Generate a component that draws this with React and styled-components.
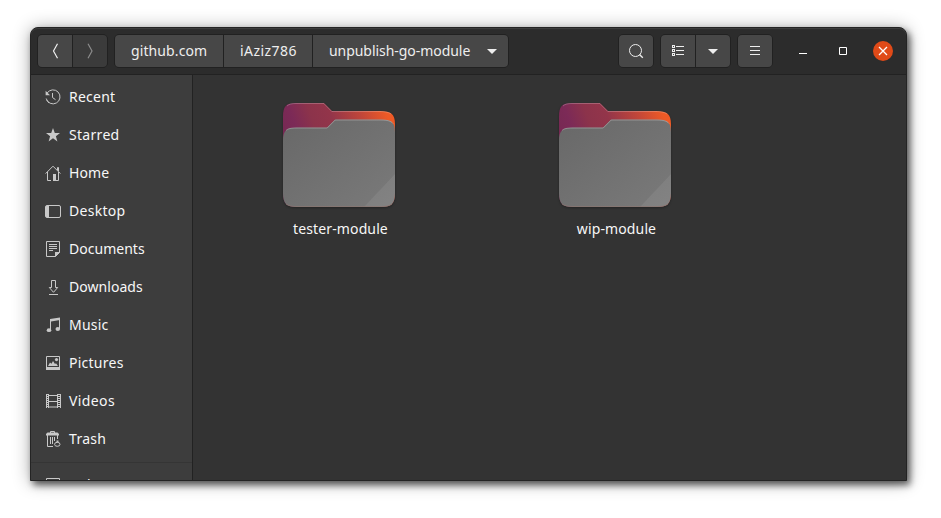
import React from 'react';
import styled, { createGlobalStyle } from 'styled-components';

const GlobalStyle = createGlobalStyle`
  *, *::before, *::after { box-sizing: border-box; }
  body {
    margin: 0;
    background: #fff;
    color: #f7f7f7;
    font: 14px/20px "Noto Sans", "Open Sans", sans-serif;
    overflow: hidden;
  }
`;

const Stage = styled.div`
  height: 518px;
  padding: 27px 34px 37px 30px;
`;

const Window = styled.main`
  display: flex;
  flex-direction: column;
  height: 454px;
  border: 1px solid #242424;
  border-radius: 8px 8px 0 0;
  background: #2c2c2c;
  box-shadow: 0 1px 18px rgba(0, 0, 0, 0.32), 3px 4px 7px rgba(0, 0, 0, 0.6);
`;

const HeaderBar = styled.header`
  display: flex;
  align-items: center;
  height: 47px;
  padding: 0 13px 0 6px;
  border-bottom: 1px solid #222;
  border-radius: 7px 7px 0 0;
  box-shadow: inset 0 1px #3c3c3c;
`;

const ButtonGroup = styled.div`
  display: flex;
  flex: none;
  gap: 1px;
  height: 34px;
  margin-right: ${(p) => p.$gap ?? 6}px;
  border: 1px solid #212121;
  border-radius: 5px;
  overflow: hidden;
  background: #212121;
`;

const Button = styled.button`
  display: flex;
  align-items: center;
  justify-content: center;
  width: ${(p) => p.$width ?? 34}px;
  padding: 0;
  border: 0;
  background: ${(p) => (p.disabled ? '#3b3b3b' : '#474747')};
  color: ${(p) => (p.disabled ? '#8c8c8c' : '#eee')};
  font: inherit;
`;

const Crumb = styled(Button)`
  justify-content: flex-start;
  padding-left: 16px;
  gap: 17px;
`;

const Label = styled.span`
  white-space: nowrap;
  letter-spacing: ${(p) => p.$tracking ?? 0}px;
`;

const Spacer = styled.div`
  flex: 1;
`;

const WindowControls = styled.div`
  display: flex;
  gap: 20px;
`;

const Control = styled.button`
  display: flex;
  width: 20px;
  height: 20px;
  padding: 0;
  border: 0;
  border-radius: 50%;
  background: ${(p) => (p.$close ? '#e04a18' : 'transparent')};
  color: #fff;
`;

const Body = styled.div`
  display: flex;
  flex: 1;
  min-height: 0;
`;

const Sidebar = styled.nav`
  width: 162px;
  padding-top: 3px;
  border-right: 1px solid #222;
  background: #3d3d3d;
  overflow: hidden;
`;

const Place = styled.a`
  display: flex;
  align-items: center;
  gap: 8px;
  height: ${(p) => p.$height ?? 38}px;
  padding-left: 14px;
`;

const Separator = styled.hr`
  height: 1px;
  margin: 4px 0;
  border: 0;
  background: #353535;
`;

const PlaceIcon = styled.svg`
  width: 16px;
  height: 16px;
  flex: none;
  color: #c8c8c8;
`;

const Files = styled.section`
  display: grid;
  flex: 1;
  grid-template-columns: repeat(2, 276px);
  align-content: start;
  padding: 28px 0 0 8px;
  background: #333;
`;

const FileItem = styled.figure`
  display: flex;
  flex-direction: column;
  align-items: center;
  gap: 12px;
  margin: 0;
`;

const FileName = styled.figcaption`
  padding-left: 3px;
  letter-spacing: 0.12px;
`;

const FolderArt = styled.svg`
  display: block;
  overflow: visible;
  filter: drop-shadow(0 1px 1px rgba(0, 0, 0, 0.3));
`;

const icons = {
  recent: (
    <g fill="none" stroke="currentColor">
      <path d="M2.1 4.1A7 7 0 1 1 1.2 9.5M1.8 11.2A7 7 0 0 0 4 13.8" />
      <path d="M7.5 4v4.5l3 2.2" />
      <path d="M.6 1.8v4.4H5z" fill="currentColor" stroke="none" />
    </g>
  ),
  starred: <path fill="currentColor" d="M8 1l1.8 5H15l-4.1 3.2L12.4 14.5 8 11.3l-4.4 3.2 1.5-5.3L1 6h5.2z" />,
  home: (
    <g fill="none" stroke="currentColor">
      <path d="M.6 8.6L8 1.2l7.4 7.4M2.5 7v8.5H6M13.5 7v8.5H11M12.5 5.2V2.5h1v3.6" />
      <path d="M8 9h3v7H8z" fill="currentColor" stroke="none" />
    </g>
  ),
  desktop: (
    <g>
      <rect x=".5" y="2.5" width="15" height="12" rx="1.5" fill="none" stroke="currentColor" />
      <path fill="currentColor" d="M1 3h3v11H1z" />
    </g>
  ),
  documents: (
    <g>
      <path d="M1.5.5h13v11l-4 4h-9z" fill="none" stroke="currentColor" />
      <path d="M4 3.5h8M4 5.5h8M4 7.5h8M4 9.5h4" stroke="currentColor" />
      <path d="M10 16v-5h5z" fill="currentColor" />
    </g>
  ),
  downloads: (
    <path
      d="M6.5 1.5h4v7h2.2L8.5 13.3 4.3 8.5h2.2zM4 15.5h9"
      fill="none"
      stroke="currentColor"
    />
  ),
  music: (
    <g fill="currentColor">
      <path d="M5 2l10-1.5v2.6L6 4.4V13H5z" />
      <path d="M14 2h1v10h-1z" />
      <ellipse cx="4" cy="13.2" rx="2.3" ry="1.9" />
      <ellipse cx="12.8" cy="12" rx="2.3" ry="1.9" />
    </g>
  ),
  pictures: (
    <g>
      <path d="M1.5 1.5h13v12h-13z" fill="none" stroke="currentColor" />
      <path d="M1 12h14v3H1zM3 11l2-3.5 1.5 1.3L8 6l2 3 1-.8 2 2.8z" fill="currentColor" />
      <circle cx="11.5" cy="4.6" r="1.6" fill="currentColor" />
    </g>
  ),
  videos: (
    <g fill="none" stroke="currentColor">
      <path d="M3.5 1v14M12.5 1v14M3 2.5h10M3 8.5h10M3 14h10" />
      <path d="M1 1.5h3M1 3.5h3M1 5.5h3M1 7.5h3M1 9.5h3M1 11.5h3M1 13.5h3M12 1.5h4M12 3.5h4M12 5.5h4M12 7.5h4M12 9.5h4M12 11.5h4M12 13.5h4" />
      <path d="M1.5 1v14M15.5 1v14" />
    </g>
  ),
  trash: (
    <g fill="none" stroke="currentColor">
      <path d="M5.5 2V.5h4V2" />
      <path d="M1 4.5V3l1.5-1.5h10L14 3v1.5z" fill="currentColor" stroke="none" />
      <path d="M2.5 4v11.5H8M12.5 4v4M5.5 6v7M7.5 6v7M9.5 6v4" />
      <path d="M12.5 9.5v2" strokeWidth="2" />
      <ellipse cx="12.3" cy="13.3" rx="2.7" ry="2" />
    </g>
  ),
  drive: <path d="M1.5 1.5h13v13h-13z" fill="none" stroke="currentColor" />,
};

const places = [
  ['recent', 'Recent', 0.25],
  ['starred', 'Starred', 0.3],
  ['home', 'Home', 0.1],
  ['desktop', 'Desktop', 0.3],
  ['documents', 'Documents', 0.02],
  ['downloads', 'Downloads', 0.04],
  ['music', 'Music', 0.2],
  ['pictures', 'Pictures', 0.25],
  ['videos', 'Videos', 0.4],
  ['trash', 'Trash', 0.3],
];

function PlaceRow({ icon, name, tracking, height }) {
  return (
    <Place $height={height}>
      <PlaceIcon viewBox="0 0 16 16">{icons[icon]}</PlaceIcon>
      <Label $tracking={tracking}>{name}</Label>
    </Place>
  );
}

const FRONT =
  'M0 38C0 27 4 24.5 14 24.5H44L52 16.5H98C108 16.5 112 19 112 29V90C112 101 108 104 98 104H14C4 104 0 101 0 90Z';

function Folder({ id }) {
  return (
    <FolderArt width="112" height="104" viewBox="0 0 112 104">
      <defs>
        <linearGradient id={`${id}-back`} gradientUnits="userSpaceOnUse" x1="2" y1="34" x2="108" y2="-4">
          <stop offset="0" stopColor="#772953" />
          <stop offset=".12" stopColor="#7c2a57" />
          <stop offset=".28" stopColor="#8c334b" />
          <stop offset=".45" stopColor="#93354a" />
          <stop offset=".7" stopColor="#c0463a" />
          <stop offset=".92" stopColor="#ee5a26" />
        </linearGradient>
        <linearGradient id={`${id}-front`} x1="0" y1="0" x2="1" y2="1">
          <stop offset="0" stopColor="#686868" />
          <stop offset="1" stopColor="#7a7a7a" />
        </linearGradient>
        <clipPath id={`${id}-clip`}>
          <path d={FRONT} />
        </clipPath>
      </defs>
      <path
        d="M0 14C0 3 3 0 13 0H41L49 8H97C108 8 112 11 112 21V90C112 101 108 104 98 104H14C4 104 0 101 0 90Z"
        fill={`url(#${id}-back)`}
      />
      <path d="M4 3C6 1 9 .5 13 .5H40.8L48.8 8.5H97C103 8.5 106 9.5 108 11" fill="none" stroke="#fff" strokeOpacity=".22" />
      <path d={FRONT} fill={`url(#${id}-front)`} />
      <g clipPath={`url(#${id}-clip)`}>
        <path d="M112 71V104H81Z" fill="#fff" fillOpacity=".07" />
      </g>
      <path d="M3 27.5C5 25.5 8 25 14 25H44.2L52.2 17H98C104 17 108 18 110 20.5" fill="none" stroke="#fff" strokeOpacity=".28" />
      <path d="M3 101C6 103 9 103.5 14 103.5H98C103 103.5 106 103 109 101" fill="none" stroke="#8c7670" strokeOpacity=".7" />
    </FolderArt>
  );
}

function Chevron({ right }) {
  return (
    <svg width="16" height="16" viewBox="0 0 16 16" fill="none" stroke="currentColor" strokeWidth="1.2">
      <path d={right ? 'M6 .8l4 7.2-4 7.2' : 'M10.5 .8l-4 7.2 4 7.2'} />
    </svg>
  );
}

function Caret() {
  return (
    <svg width="10" height="16" viewBox="0 0 10 16">
      <path d="M0 6h10L5 11z" fill="currentColor" />
    </svg>
  );
}

export default function App() {
  return (
    <>
      <GlobalStyle />
      <Stage>
        <Window>
          <HeaderBar>
            <ButtonGroup>
              <Button aria-label="Back"><Chevron /></Button>
              <Button aria-label="Forward" disabled><Chevron right /></Button>
            </ButtonGroup>
            <ButtonGroup>
              <Crumb $width={108}><Label $tracking={0.1}>github.com</Label></Crumb>
              <Crumb $width={88}><Label $tracking={0.45}>iAziz786</Label></Crumb>
              <Crumb $width={195}>
                <Label $tracking={-0.05}>unpublish-go-module</Label>
                <Caret />
              </Crumb>
            </ButtonGroup>
            <Spacer />
            <ButtonGroup>
              <Button aria-label="Search">
                <svg width="16" height="16" viewBox="0 0 16 16" fill="none" stroke="currentColor">
                  <circle cx="7.5" cy="7.5" r="6" />
                  <path d="M11.5 11.5l3.3 3.2" strokeWidth="1.4" />
                </svg>
              </Button>
            </ButtonGroup>
            <ButtonGroup>
              <Button aria-label="List view">
                <svg width="16" height="16" viewBox="0 0 16 16" fill="none" stroke="currentColor" shapeRendering="crispEdges">
                  <path d="M2.5 2.5h2v2h-2zM2.5 6.5h2v2h-2zM2.5 10.5h2v2h-2zM6 3.5h8M6 7.5h8M6 11.5h8" />
                </svg>
              </Button>
              <Button aria-label="View options"><Caret /></Button>
            </ButtonGroup>
            <ButtonGroup $gap={20}>
              <Button aria-label="Menu">
                <svg width="16" height="16" viewBox="0 0 16 16" stroke="currentColor" shapeRendering="crispEdges">
                  <path d="M3 3.5h10M3 7.5h10M3 11.5h10" />
                </svg>
              </Button>
            </ButtonGroup>
            <WindowControls>
              <Control aria-label="Minimize">
                <svg width="20" height="20" viewBox="0 0 20 20" stroke="currentColor">
                  <path d="M6 12.5h8" />
                </svg>
              </Control>
              <Control aria-label="Maximize">
                <svg width="20" height="20" viewBox="0 0 20 20" fill="none" stroke="currentColor">
                  <path d="M6.5 6.5h7v7h-7z" />
                </svg>
              </Control>
              <Control aria-label="Close" $close>
                <svg width="20" height="20" viewBox="0 0 20 20" stroke="currentColor" strokeWidth="1.3">
                  <path d="M6 6l8 8M14 6l-8 8" />
                </svg>
              </Control>
            </WindowControls>
          </HeaderBar>
          <Body>
            <Sidebar>
              {places.map(([icon, name, tracking]) => (
                <PlaceRow key={name} icon={icon} name={name} tracking={tracking} />
              ))}
              <Separator />
              <PlaceRow icon="drive" name="Other" tracking={1} height={36} />
            </Sidebar>
            <Files>
              <FileItem>
                <Folder id="tester" />
                <FileName>tester-module</FileName>
              </FileItem>
              <FileItem>
                <Folder id="wip" />
                <FileName>wip-module</FileName>
              </FileItem>
            </Files>
          </Body>
        </Window>
      </Stage>
    </>
  );
}
